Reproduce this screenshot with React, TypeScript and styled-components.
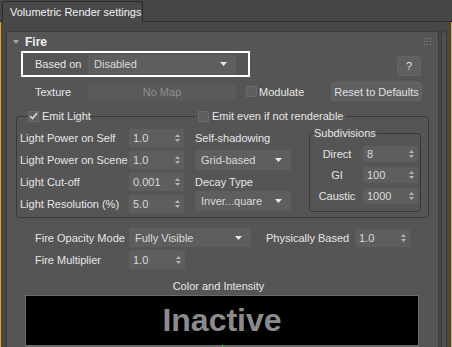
import React from "react";
import styled, { createGlobalStyle } from "styled-components";

const Global = createGlobalStyle`
  html, body { margin: 0; padding: 0; background: #454545; }
  body {
    font-family: "Liberation Sans", Arial, sans-serif;
    font-size: 11px;
    color: #e4e4e4;
    overflow: hidden;
  }
  * { box-sizing: border-box; }
`;

const Window = styled.div`
  width: 452px;
  height: 347px;
  display: flex;
  flex-direction: column;
  background: #454545;
  overflow: hidden;
`;

const TabBar = styled.div`
  height: 22px;
  flex: none;
  display: flex;
  align-items: flex-end;
  padding-left: 2px;
  border-bottom: 1px solid #2a2a2a;
  background: #464646;
`;

const Tab = styled.div`
  width: 141px;
  height: 21px;
  margin-bottom: -1px;
  padding-left: 7px;
  display: flex;
  align-items: center;
  border: 1px solid #2a2a2a;
  border-bottom: 1px solid #494949;
  border-radius: 3px 3px 0 0;
  background: #494949;
  font-size: 11px;
  color: #f2f2f2;
  white-space: nowrap;
`;

const Main = styled.div`
  flex: 1;
  min-height: 0;
  display: flex;
  border-left: 1px solid #eda318;
  border-right: 1px solid #eda318;
  background: #474747;
  overflow: hidden;
`;

const Content = styled.div`
  flex: 1;
  padding: 9px 0 0 5px;
  overflow: hidden;
`;

const ScrollCol = styled.div`
  width: 12px;
  flex: none;
  padding: 9px 4px 0 2px;
`;

const Thumb = styled.div`
  height: 100%;
  border: 1px solid #393939;
  border-bottom: none;
  border-radius: 3px 3px 0 0;
  background: #515151;
`;

const Rollout = styled.div`
  width: 433px;
  border: 1px solid #3a3a3a;
  border-bottom: none;
  border-radius: 3px 3px 0 0;
  background: #555555;
  padding-bottom: 20px;
`;

const Header = styled.div`
  height: 19px;
  display: flex;
  align-items: center;
  padding: 0 7px 0 6px;
`;

const Title = styled.span`
  margin-left: 6px;
  font-weight: bold;
  font-size: 12px;
  color: #f0f0f0;
`;

const Grip = styled.svg`
  margin-left: auto;
`;

const Row = styled.div<{ $top?: number; $left?: number }>`
  display: flex;
  align-items: center;
  margin-top: ${(p) => p.$top ?? 0}px;
  padding-left: ${(p) => p.$left ?? 0}px;
`;

const Highlight = styled.div`
  width: 229px;
  height: 26px;
  margin-left: 14px;
  border: 2px solid #ffffff;
  display: flex;
  align-items: center;
  padding-left: 12px;
`;

const Label = styled.span<{ $w?: number; $center?: boolean; $dim?: boolean }>`
  flex: none;
  width: ${(p) => (p.$w ? `${p.$w}px` : "auto")};
  text-align: ${(p) => (p.$center ? "center" : "left")};
  color: ${(p) => (p.$dim ? "#8c8c8c" : "#e6e6e6")};
  white-space: nowrap;
  line-height: 14px;
`;

const Field = styled.div<{ $w: number; $h?: number; $spin?: boolean }>`
  width: ${(p) => p.$w}px;
  height: ${(p) => p.$h ?? 18}px;
  flex: none;
  display: flex;
  align-items: center;
  padding: ${(p) => (p.$spin ? "0 4px 0 4px" : "0 9px 0 6px")};
  background: #5e5e5e;
  border-radius: 2px;
  color: #dadada;
  white-space: nowrap;
`;

const Arrow = styled.svg`
  margin-left: auto;
  flex: none;
`;

const Button = styled.div<{ $w: number; $h: number; $dim?: boolean }>`
  width: ${(p) => p.$w}px;
  height: ${(p) => p.$h}px;
  flex: none;
  display: flex;
  align-items: center;
  justify-content: center;
  background: ${(p) => (p.$dim ? "#5a5a5a" : "#5f5f5f")};
  border: 1px solid ${(p) => (p.$dim ? "#5a5a5a" : "#666666")};
  border-radius: 3px;
  color: ${(p) => (p.$dim ? "#8e8e8e" : "#e0e0e0")};
  white-space: nowrap;
`;

const Box = styled.span`
  width: 11px;
  height: 11px;
  flex: none;
  display: inline-flex;
  align-items: center;
  justify-content: center;
  background: #5f5f5f;
  border: 1px solid #6a6a6a;
`;

const Group = styled.fieldset`
  margin: 8px 0 0 9px;
  width: 413px;
  min-width: 0;
  padding: 3px 6px 4px 3px;
  border: 1px solid #383838;
  border-radius: 3px;
`;

const GroupLegend = styled.legend`
  margin-left: 8px;
  padding: 0;
  display: flex;
  align-items: center;
  line-height: 14px;
  height: 14px;
`;

const LegendPart = styled.span<{ $w?: number }>`
  display: flex;
  align-items: center;
  gap: 3px;
  width: ${(p) => (p.$w ? `${p.$w}px` : "auto")};
  padding-right: 3px;
`;

const LegendLine = styled.span<{ $w: number }>`
  width: ${(p) => p.$w}px;
  height: 1px;
  background: #383838;
  margin-right: 3px;
`;

const Columns = styled.div`
  display: flex;
  align-items: flex-start;
`;

const LeftCol = styled.div`
  width: 164px;
  padding-top: 3px;
  display: flex;
  flex-direction: column;
  gap: 4px;
`;

const MidCol = styled.div`
  width: 96px;
  margin-left: 11px;
  padding-top: 3px;
  display: flex;
  flex-direction: column;
`;

const MidLabel = styled.div<{ $top?: number }>`
  height: 18px;
  margin-top: ${(p) => p.$top ?? 0}px;
  display: flex;
  align-items: center;
  color: #e6e6e6;
`;

const Sub = styled.fieldset`
  margin: 0 0 0 18px;
  width: 112px;
  min-width: 0;
  padding: 6px 2px 7px 1px;
  border: 1px solid #383838;
  border-radius: 3px;
  display: flex;
  flex-direction: column;
  gap: 5px;
`;

const SubLegend = styled.legend`
  margin-left: 2px;
  padding: 0 1px;
  line-height: 14px;
  color: #e6e6e6;
`;

const Caption = styled.div`
  margin-top: 10px;
  height: 14px;
  line-height: 14px;
  text-align: center;
  padding-right: 8px;
  color: #e6e6e6;
`;

const Preview = styled.div`
  margin: 2px 0 0 18px;
  width: 394px;
  height: 50px;
  background: #000;
  border: 1px solid #6a6a6a;
  border-bottom: none;
  display: flex;
  align-items: center;
  justify-content: center;
  font-family: "Liberation Sans", Arial, sans-serif;
  font-weight: bold;
  font-size: 32px;
  color: #8b8b8b;
`;

const Rule = styled.div`
  margin-left: 18px;
  width: 394px;
  height: 2px;
  background: #6a6a6a;
  display: flex;
  justify-content: center;
`;

const Tick = styled.span`
  width: 1px;
  height: 2px;
  background: #22dd22;
`;

const DownArrow = ({ color = "#e8e8e8" }: { color?: string }) => (
  <Arrow width="7" height="4" viewBox="0 0 7 4">
    <path d="M0 0 H7 L3.5 4 Z" fill={color} />
  </Arrow>
);

const SpinArrows = () => (
  <Arrow width="5" height="10" viewBox="0 0 5 10">
    <path d="M0 4 L2.5 1 L5 4 Z" fill="#b4b4b4" />
    <path d="M0 6 L2.5 9 L5 6 Z" fill="#b4b4b4" />
  </Arrow>
);

const Spinner = ({ value, w = 55, h = 18 }: { value: string; w?: number; h?: number }) => (
  <Field $w={w} $h={h} $spin>
    {value}
    <SpinArrows />
  </Field>
);

const Dropdown = ({ value, w, h = 19 }: { value: string; w: number; h?: number }) => (
  <Field $w={w} $h={h}>
    {value}
    <DownArrow />
  </Field>
);

const Check = ({ checked }: { checked?: boolean }) => (
  <Box>
    {checked && (
      <svg width="9" height="8" viewBox="0 0 9 8">
        <path d="M1 4 L3.5 6.5 L8 1" stroke="#d8d8d8" strokeWidth="1.6" fill="none" />
      </svg>
    )}
  </Box>
);

const lightRows: [string, string][] = [
  ["Light Power on Self", "1.0"],
  ["Light Power on Scene", "1.0"],
  ["Light Cut-off", "0.001"],
  ["Light Resolution (%)", "5.0"],
];

const subRows: [string, string][] = [
  ["Direct", "8"],
  ["GI", "100"],
  ["Caustic", "1000"],
];

export default function App() {
  return (
    <Window>
      <Global />
      <TabBar>
        <Tab>Volumetric Render settings</Tab>
      </TabBar>
      <Main>
        <Content>
          <Rollout>
            <Header>
              <svg width="6" height="4" viewBox="0 0 6 4">
                <path d="M0 0 H6 L3 4 Z" fill="#a8a8a8" />
              </svg>
              <Title>Fire</Title>
              <Grip width="7" height="7" viewBox="0 0 7 7">
                {[0, 3, 6].map((x) =>
                  [0, 3, 6].map((y) => (
                    <rect key={`${x}-${y}`} x={x} y={y} width="1" height="1" fill="#8a8a8a" />
                  ))
                )}
              </Grip>
            </Header>

            <Row>
              <Highlight>
                <Label $w={53}>Based on</Label>
                <Dropdown value="Disabled" w={148} />
              </Highlight>
              <Button $w={24} $h={20} style={{ marginLeft: "auto", marginRight: 17, marginTop: 4 }}>
                ?
              </Button>
            </Row>

            <Row $top={5} $left={28}>
              <Label $w={53}>Texture</Label>
              <Button $w={148} $h={18} $dim>
                No Map
              </Button>
              <span style={{ marginLeft: 10 }} />
              <Check />
              <Label style={{ marginLeft: 2 }}>Modulate</Label>
              <Button $w={91} $h={19} style={{ marginLeft: "auto", marginRight: 16 }}>
                Reset to Defaults
              </Button>
            </Row>

            <Group>
              <GroupLegend>
                <LegendPart $w={62}>
                  <Check checked />
                  <Label>Emit Light</Label>
                </LegendPart>
                <LegendLine $w={105} />
                <LegendPart>
                  <Check />
                  <Label>Emit even if not renderable</Label>
                </LegendPart>
              </GroupLegend>
              <Columns>
                <LeftCol>
                  {lightRows.map(([label, value]) => (
                    <Row key={label}>
                      <Label $w={109}>{label}</Label>
                      <Spinner value={value} />
                    </Row>
                  ))}
                </LeftCol>
                <MidCol>
                  <MidLabel>Self-shadowing</MidLabel>
                  <div style={{ marginTop: 3 }}>
                    <Dropdown value="Grid-based" w={96} h={20} />
                  </div>
                  <MidLabel $top={3}>Decay Type</MidLabel>
                  <Dropdown value="Inver...quare" w={96} h={20} />
                </MidCol>
                <Sub>
                  <SubLegend>Subdivisions</SubLegend>
                  {subRows.map(([label, value]) => (
                    <Row key={label}>
                      <Label $w={52} $center>
                        {label}
                      </Label>
                      <Spinner value={value} h={16} />
                    </Row>
                  ))}
                </Sub>
              </Columns>
            </Group>

            <Row $top={10} $left={28}>
              <Label $w={94}>Fire Opacity Mode</Label>
              <Dropdown value="Fully Visible" w={122} />
              <Label $w={89} style={{ marginLeft: 15 }}>
                Physically Based
              </Label>
              <Spinner value="1.0" />
            </Row>

            <Row $top={3} $left={28}>
              <Label $w={94}>Fire Multiplier</Label>
              <Spinner value="1.0" w={56} h={19} />
            </Row>

            <Caption>Color and Intensity</Caption>
            <Preview>Inactive</Preview>
            <Rule>
              <Tick />
            </Rule>
          </Rollout>
        </Content>
        <ScrollCol>
          <Thumb />
        </ScrollCol>
      </Main>
    </Window>
  );
}
